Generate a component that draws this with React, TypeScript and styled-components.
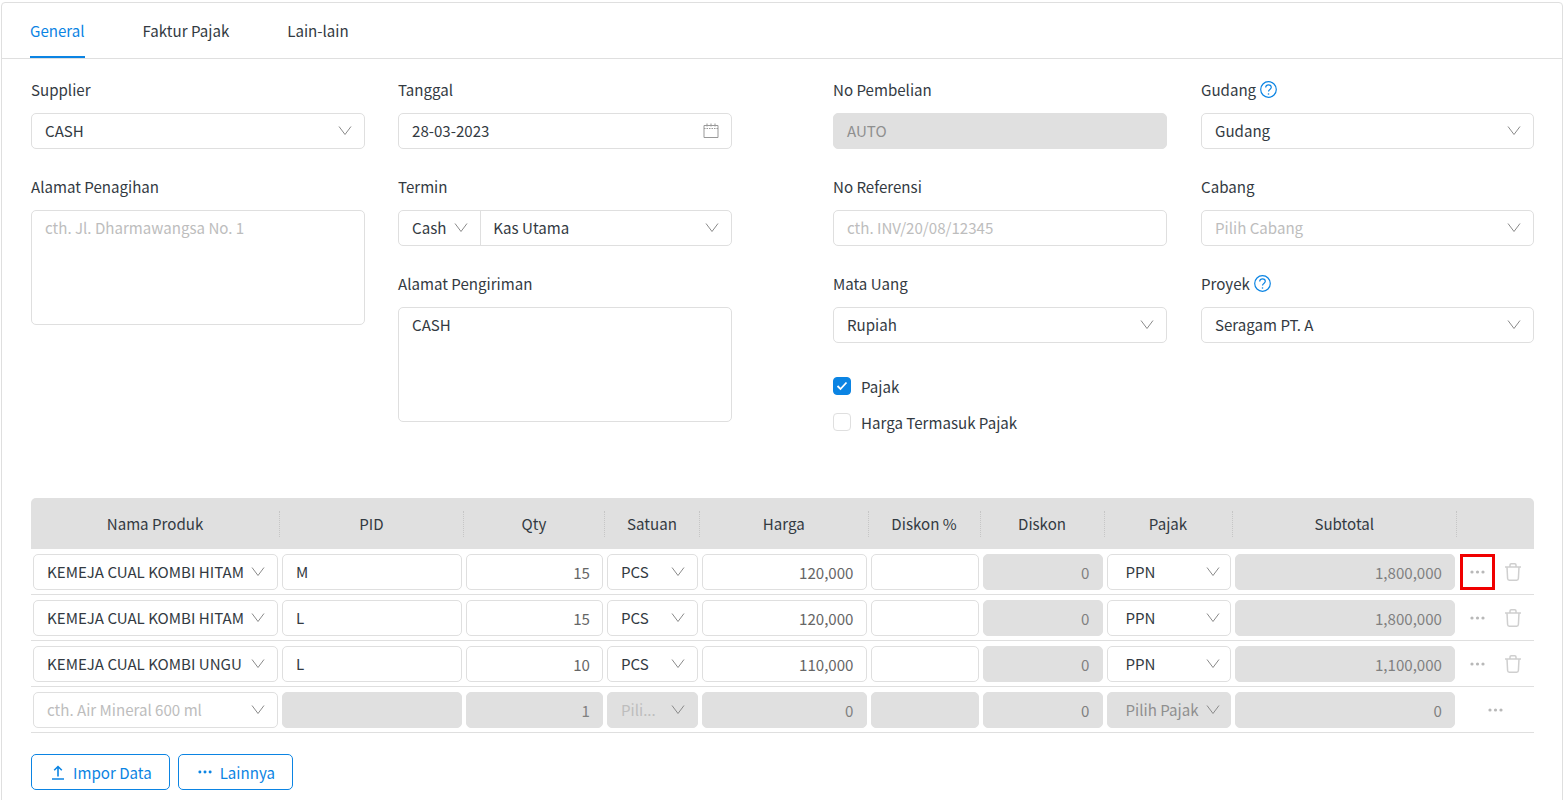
import React from "react";
import styled, { createGlobalStyle } from "styled-components";

const BLUE = "#0b84e3";
const LINE = "#dfdfdf";
const GREY = "#e0e0e0";
const TEXT = "#333a42";
const TABLE_COLUMNS = "249px 184px 141px 95px 168.5px 112px 124px 128px 224.5px 77px";

const GlobalStyle = createGlobalStyle`
  html, body {
    margin: 0;
    height: 100%;
    overflow: hidden;
    background: #fff;
  }
  body {
    font-family: "Noto Sans CJK SC", "Noto Sans", sans-serif;
    font-size: 15.1px;
    line-height: 22px;
    color: ${TEXT};
  }
`;

const Card = styled.div`
  margin: 2px 2px 0 1px;
  min-height: 830px;
  border: 1px solid ${LINE};
  border-radius: 4px 4px 0 0;
`;

const Tabs = styled.div`
  display: flex;
  gap: 58px;
  height: 55px;
  padding-left: 28px;
  border-bottom: 1px solid ${LINE};
`;

const Tab = styled.div<{ $active?: boolean }>`
  height: 53px;
  line-height: 54px;
  color: ${(p) => (p.$active ? BLUE : TEXT)};
  border-bottom: 2px solid ${(p) => (p.$active ? BLUE : "transparent")};
`;

const Content = styled.div`
  padding: 20px 28px 0 29px;
`;

const FormGrid = styled.div`
  display: grid;
  grid-template-columns: 701px 701px;
  column-gap: 101px;
`;

const FormHalf = styled.div<{ $end?: boolean }>`
  display: grid;
  grid-template-columns: ${(p) => (p.$end ? "334px 333px" : "334px 334px")};
  column-gap: ${(p) => (p.$end ? "34px" : "33px")};
`;

const Column = styled.div`
  display: flex;
  flex-direction: column;
`;

const Field = styled.div`
  margin-bottom: 27px;
`;

const Label = styled.div`
  display: flex;
  align-items: center;
  gap: 4px;
  height: 20px;
  margin-bottom: 14px;
`;

const Control = styled.div<{ $disabled?: boolean; $padLeft?: number; $padRight?: number; $right?: boolean }>`
  display: flex;
  align-items: center;
  justify-content: ${(p) => (p.$right ? "flex-end" : "space-between")};
  box-sizing: border-box;
  height: 36px;
  padding: 0 ${(p) => p.$padRight ?? 12}px 2px ${(p) => p.$padLeft ?? 13}px;
  white-space: nowrap;
  background: ${(p) => (p.$disabled ? GREY : "#fff")};
  border: 1px solid ${(p) => (p.$disabled ? GREY : LINE)};
  border-radius: 5px;
`;

const Area = styled.div`
  box-sizing: border-box;
  height: 115px;
  padding: 5px 13px;
  background: #fff;
  border: 1px solid ${LINE};
  border-radius: 5px;
`;

const Placeholder = styled.span`
  color: #bdbdbd;
`;

const Muted = styled.span`
  color: #8f8f8f;
`;

const Amount = styled.span<{ $muted?: boolean }>`
  position: relative;
  top: 1px;
  color: ${(p) => (p.$muted ? "#808080" : "#666")};
`;

const Segment = styled.div`
  display: flex;
  align-items: center;
  gap: 8px;
  height: 100%;
  margin-bottom: -2px;
  padding-bottom: 2px;
  padding-right: 12px;
  border-right: 1px solid ${LINE};
`;

const SegmentValue = styled.div`
  flex: 1;
  display: flex;
  align-items: center;
  justify-content: space-between;
  padding-left: 12px;
`;

const CheckRow = styled.label<{ $first?: boolean }>`
  display: flex;
  align-items: center;
  gap: 10px;
  height: 18px;
  line-height: 17px;
  margin: ${(p) => (p.$first ? "7px 0 18px" : "0")};
`;

const Box = styled.span<{ $checked?: boolean }>`
  display: flex;
  align-items: center;
  justify-content: center;
  box-sizing: border-box;
  width: 18px;
  height: 18px;
  background: ${(p) => (p.$checked ? BLUE : "#fff")};
  border: 1px solid ${(p) => (p.$checked ? BLUE : LINE)};
  border-radius: 4px;
`;

const Table = styled.div`
  margin-top: 49px;
`;

const HeaderRow = styled.div`
  display: grid;
  grid-template-columns: ${TABLE_COLUMNS};
  align-items: center;
  height: 51px;
  background: ${GREY};
  border-radius: 5px 5px 0 0;
`;

const HeaderCell = styled.div<{ $last?: boolean }>`
  height: 26px;
  line-height: 24px;
  text-align: center;
  border-right: ${(p) => (p.$last ? "none" : "1px dotted #c6c6c6")};
`;

const Row = styled.div`
  display: grid;
  grid-template-columns: ${TABLE_COLUMNS};
  padding: 5px 0 4px;
  border-bottom: 1px solid ${LINE};
`;

const Cell = styled.div`
  padding: 0 2px;
  min-width: 0;
`;

const Actions = styled.div<{ $center?: boolean }>`
  display: flex;
  align-items: center;
  justify-content: ${(p) => (p.$center ? "center" : "flex-start")};
  padding-left: ${(p) => (p.$center ? "0" : "3px")};
`;

const MoreButton = styled.div<{ $marked?: boolean }>`
  display: flex;
  align-items: center;
  justify-content: center;
  box-sizing: border-box;
  width: 35px;
  height: 36px;
  border: 3px solid ${(p) => (p.$marked ? "#f00000" : "transparent")};
`;

const TrashButton = styled.div`
  display: flex;
  justify-content: center;
  width: 36px;
`;

const Footer = styled.div`
  display: flex;
  gap: 8px;
  margin-top: 21px;
`;

const OutlineButton = styled.div`
  display: flex;
  align-items: center;
  gap: 8px;
  box-sizing: border-box;
  height: 36px;
  padding: 0 17px 0 19px;
  color: ${BLUE};
  border: 1px solid ${BLUE};
  border-radius: 5px;
`;

const Chevron = () => (
  <svg width="14" height="9" viewBox="0 0 14 9" fill="none" style={{ flexShrink: 0 }}>
    <path d="M1 .5l6 8 6-8" stroke="#8a8a8a" strokeWidth="1" />
  </svg>
);

const Calendar = () => (
  <svg width="16" height="15" viewBox="0 0 16 15" fill="none" stroke="#999">
    <path d="M1 2.5h14v12H1z" />
    <path d="M1 5.5h14" strokeDasharray="1.5 1" />
    <path d="M4 .5v3M8 .5v3M12 .5v3" />
  </svg>
);

const Help = () => (
  <svg width="17" height="17" viewBox="0 0 17 17" fill="none" stroke={BLUE}>
    <circle cx="8.5" cy="8.5" r="7.8" strokeWidth="1.2" />
    <path d="M5.7 6.5c0-1.7 1.2-2.6 2.8-2.6s2.8 1 2.8 2.4c0 2.2-2.8 2-2.8 4.2" strokeWidth="1.2" />
    <circle cx="8.5" cy="13" r="0.8" fill={BLUE} stroke="none" />
  </svg>
);

const Tick = () => (
  <svg width="12" height="10" viewBox="0 0 12 10" fill="none">
    <path d="M1.5 5l3 3 6-6.5" stroke="#fff" strokeWidth="1.8" />
  </svg>
);

const Dots = ({ color = "#b8b8b8", size = 15 }: { color?: string; size?: number }) => (
  <svg width={size} height="4" viewBox="0 0 15 4" fill={color}>
    <circle cx="2" cy="2" r="1.6" />
    <circle cx="7.5" cy="2" r="1.6" />
    <circle cx="13" cy="2" r="1.6" />
  </svg>
);

const Trash = () => (
  <svg width="16" height="18" viewBox="0 0 16 18" fill="none" stroke="#cfcfcf" strokeWidth="1.5">
    <path d="M0 4h16M5 4V2q0-1.2 1.2-1.2h3.6Q11 .8 11 2v2" />
    <path d="M2 4l.6 11.5q.1 1.7 1.7 1.7h7.4q1.6 0 1.7-1.7L14 4" />
  </svg>
);

const Upload = () => (
  <svg width="14" height="15" viewBox="0 0 14 15" fill="none" stroke={BLUE} strokeWidth="1.6">
    <path d="M7 11.5V1.5M3.2 5.2L7 1.5l3.8 3.7M1 14h12" />
  </svg>
);

const products = [
  { name: "KEMEJA CUAL KOMBI HITAM", pid: "M", qty: "15", price: "120,000", total: "1,800,000" },
  { name: "KEMEJA CUAL KOMBI HITAM", pid: "L", qty: "15", price: "120,000", total: "1,800,000" },
  { name: "KEMEJA CUAL KOMBI UNGU", pid: "L", qty: "10", price: "110,000", total: "1,100,000" },
];

const headers = ["Nama Produk", "PID", "Qty", "Satuan", "Harga", "Diskon %", "Diskon", "Pajak", "Subtotal", ""];

const App = () => {
  return (
    <>
      <GlobalStyle />
      <Card>
        <Tabs>
          <Tab $active>General</Tab>
          <Tab>Faktur Pajak</Tab>
          <Tab>Lain-lain</Tab>
        </Tabs>
        <Content>
          <FormGrid>
            <FormHalf>
              <Column>
                <Field>
                  <Label>Supplier</Label>
                  <Control>CASH<Chevron /></Control>
                </Field>
                <Field>
                  <Label>Alamat Penagihan</Label>
                  <Area><Placeholder>cth. Jl. Dharmawangsa No. 1</Placeholder></Area>
                </Field>
              </Column>
              <Column>
                <Field>
                  <Label>Tanggal</Label>
                  <Control>28-03-2023<Calendar /></Control>
                </Field>
                <Field>
                  <Label>Termin</Label>
                  <Control>
                    <Segment>Cash<Chevron /></Segment>
                    <SegmentValue>Kas Utama<Chevron /></SegmentValue>
                  </Control>
                </Field>
                <Field>
                  <Label>Alamat Pengiriman</Label>
                  <Area>CASH</Area>
                </Field>
              </Column>
            </FormHalf>
            <FormHalf $end>
              <Column>
                <Field>
                  <Label>No Pembelian</Label>
                  <Control $disabled><Muted>AUTO</Muted></Control>
                </Field>
                <Field>
                  <Label>No Referensi</Label>
                  <Control><Placeholder>cth. INV/20/08/12345</Placeholder></Control>
                </Field>
                <Field>
                  <Label>Mata Uang</Label>
                  <Control>Rupiah<Chevron /></Control>
                </Field>
                <CheckRow $first><Box $checked><Tick /></Box>Pajak</CheckRow>
                <CheckRow><Box />Harga Termasuk Pajak</CheckRow>
              </Column>
              <Column>
                <Field>
                  <Label>Gudang <Help /></Label>
                  <Control>Gudang<Chevron /></Control>
                </Field>
                <Field>
                  <Label>Cabang</Label>
                  <Control><Placeholder>Pilih Cabang</Placeholder><Chevron /></Control>
                </Field>
                <Field>
                  <Label>Proyek <Help /></Label>
                  <Control>Seragam PT. A<Chevron /></Control>
                </Field>
              </Column>
            </FormHalf>
          </FormGrid>

          <Table>
            <HeaderRow>
              {headers.map((title, i) => (
                <HeaderCell key={i} $last={i === headers.length - 1}>{title}</HeaderCell>
              ))}
            </HeaderRow>
            {products.map((item, i) => (
              <Row key={i}>
                <Cell><Control>{item.name}<Chevron /></Control></Cell>
                <Cell><Control>{item.pid}</Control></Cell>
                <Cell><Control $right><Amount>{item.qty}</Amount></Control></Cell>
                <Cell><Control>PCS<Chevron /></Control></Cell>
                <Cell><Control $right><Amount>{item.price}</Amount></Control></Cell>
                <Cell><Control $right /></Cell>
                <Cell><Control $right $disabled><Amount $muted>0</Amount></Control></Cell>
                <Cell><Control $padLeft={18} $padRight={10}>PPN<Chevron /></Control></Cell>
                <Cell><Control $right $disabled><Amount $muted>{item.total}</Amount></Control></Cell>
                <Actions>
                  <MoreButton $marked={i === 0}><Dots /></MoreButton>
                  <TrashButton><Trash /></TrashButton>
                </Actions>
              </Row>
            ))}
            <Row>
              <Cell><Control><Placeholder>cth. Air Mineral 600 ml</Placeholder><Chevron /></Control></Cell>
              <Cell><Control $disabled /></Cell>
              <Cell><Control $right $disabled><Amount $muted>1</Amount></Control></Cell>
              <Cell><Control $disabled><Placeholder>Pili...</Placeholder><Chevron /></Control></Cell>
              <Cell><Control $right $disabled><Amount $muted>0</Amount></Control></Cell>
              <Cell><Control $disabled /></Cell>
              <Cell><Control $right $disabled><Amount $muted>0</Amount></Control></Cell>
              <Cell><Control $disabled $padLeft={18} $padRight={10}><Muted>Pilih Pajak</Muted><Chevron /></Control></Cell>
              <Cell><Control $right $disabled><Amount $muted>0</Amount></Control></Cell>
              <Actions $center><Dots /></Actions>
            </Row>
          </Table>

          <Footer>
            <OutlineButton><Upload />Impor Data</OutlineButton>
            <OutlineButton><Dots color={BLUE} size={14} />Lainnya</OutlineButton>
          </Footer>
        </Content>
      </Card>
    </>
  );
};

export default App;
